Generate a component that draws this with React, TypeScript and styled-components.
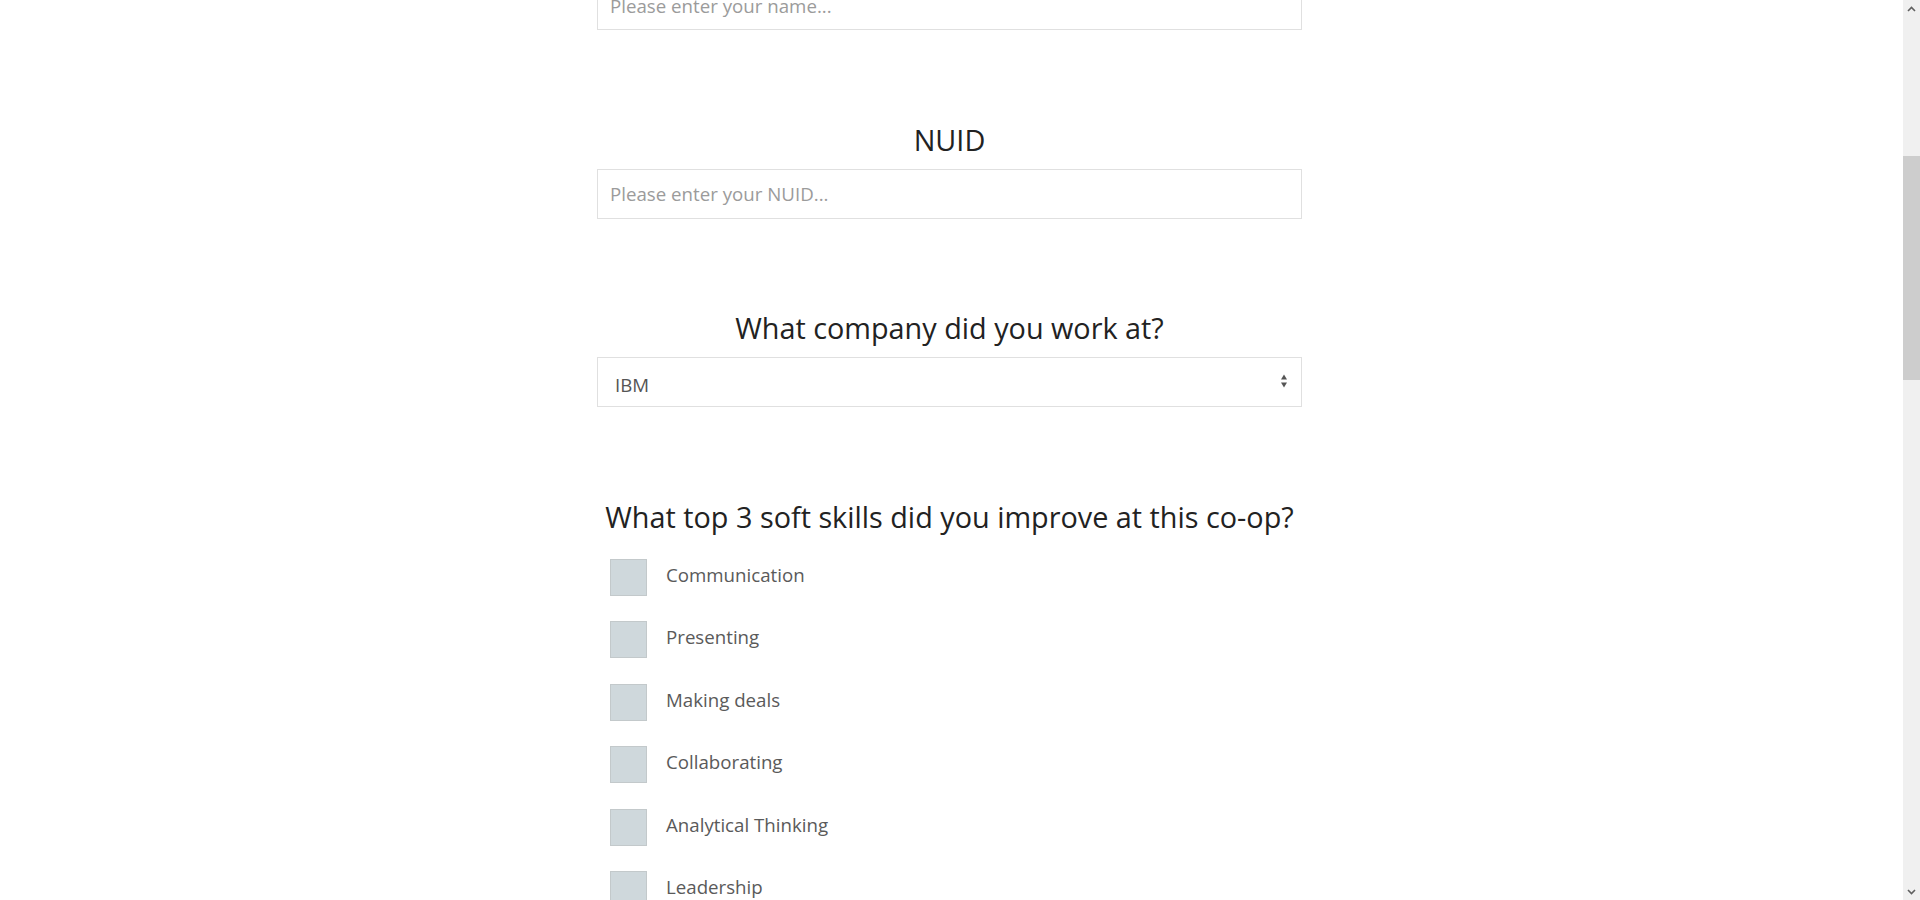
import React, { useLayoutEffect } from "react";
import styled, { createGlobalStyle } from "styled-components";

const GlobalStyle = createGlobalStyle`
  html { scrollbar-width: none; }
  html::-webkit-scrollbar { display: none; }
  body {
    margin: 0;
    background: #ffffff;
    font-family: "Open Sans", "Noto Sans", sans-serif;
  }
  * { box-sizing: border-box; }
`;

const Page = styled.main`
  width: 1903px;
  min-height: 3479px;
  padding: 489px 4px 0 0;
`;

const Form = styled.form`
  width: 705px;
  margin: 0 auto;
  display: flex;
  flex-direction: column;
  gap: 89.5px;
`;

const Section = styled.section`
  display: flex;
  flex-direction: column;
`;

const Question = styled.h2<{ $space?: number }>`
  margin: 0 0 ${(p) => p.$space ?? 9}px;
  font-size: 28.8px;
  line-height: 40px;
  font-weight: 400;
  color: #222222;
  text-align: center;
`;

const TextInput = styled.input`
  width: 100%;
  height: 50px;
  padding: 0 12px;
  border: 1px solid #e0e0e0;
  border-radius: 0;
  outline: none;
  font-family: inherit;
  font-size: 18.7px;
  color: #555555;
  background: #ffffff;
  &::placeholder {
    color: #9b9b9b;
  }
`;

const SelectWrap = styled.div`
  position: relative;
`;

const Select = styled.select`
  width: 100%;
  height: 50px;
  padding: 5px 17px 0;
  border: 1px solid #e0e0e0;
  border-radius: 0;
  outline: none;
  appearance: none;
  background: #ffffff;
  font-family: inherit;
  font-size: 18.7px;
  color: #555555;
`;

const SelectArrows = styled.svg`
  position: absolute;
  right: 14px;
  top: 16px;
  pointer-events: none;
`;

const SkillList = styled.div`
  display: flex;
  flex-direction: column;
  gap: 25.5px;
  padding-left: 13px;
`;

const SkillRow = styled.label`
  display: flex;
  align-items: flex-start;
  gap: 19px;
  cursor: pointer;
`;

const Box = styled.input`
  appearance: none;
  width: 37px;
  height: 37px;
  margin: 0;
  flex: none;
  background: #cfd8dc;
  border: 1px solid #c3c9cb;
  border-radius: 0;
  cursor: pointer;
`;

const SkillName = styled.span`
  margin-top: 3px;
  font-size: 18.7px;
  line-height: 25px;
  color: #5a5a5a;
`;

const Scrollbar = styled.div`
  position: fixed;
  top: 0;
  right: 0;
  width: 17px;
  height: 100vh;
  background: #f0f0f0;
  display: flex;
  flex-direction: column;
`;

const ScrollButton = styled.div`
  height: 17px;
  flex: none;
  display: flex;
  align-items: center;
  justify-content: center;
`;

const ScrollTrack = styled.div`
  flex: 1;
  display: flex;
  flex-direction: column;
`;

const ScrollThumb = styled.div<{ $offset: number; $size: number }>`
  margin-top: ${(p) => p.$offset}px;
  height: ${(p) => p.$size}px;
  width: 17px;
  background: #cdcdcd;
`;

const skills = [
  "Communication",
  "Presenting",
  "Making deals",
  "Collaborating",
  "Analytical Thinking",
  "Leadership",
];

export default function App() {
  useLayoutEffect(() => {
    window.scrollTo(0, 558);
  }, []);

  return (
    <>
      <GlobalStyle />
      <Page>
        <Form onSubmit={(e) => e.preventDefault()}>
          <Section>
            <Question>Name</Question>
            <TextInput type="text" placeholder="Please enter your name..." />
          </Section>
          <Section>
            <Question>NUID</Question>
            <TextInput type="text" placeholder="Please enter your NUID..." />
          </Section>
          <Section>
            <Question>What company did you work at?</Question>
            <SelectWrap>
              <Select defaultValue="IBM">
                <option value="IBM">IBM</option>
                <option value="Google">Google</option>
                <option value="Microsoft">Microsoft</option>
              </Select>
              <SelectArrows width="8" height="16" viewBox="0 0 8 16">
                <path d="M1 6.5 L4 1.5 L7 6.5 Z" fill="#555" />
                <path d="M1 9.5 L4 14.5 L7 9.5 Z" fill="#555" />
              </SelectArrows>
            </SelectWrap>
          </Section>
          <Section>
            <Question $space={22}>What top 3 soft skills did you improve at this co-op?</Question>
            <SkillList>
              {skills.map((s) => (
                <SkillRow key={s}>
                  <Box type="checkbox" />
                  <SkillName>{s}</SkillName>
                </SkillRow>
              ))}
            </SkillList>
          </Section>
        </Form>
      </Page>
      <Scrollbar>
        <ScrollButton>
          <svg width="9" height="6" viewBox="0 0 9 6">
            <path d="M1 5 L4.5 1.5 L8 5" stroke="#606060" strokeWidth="1.6" fill="none" />
          </svg>
        </ScrollButton>
        <ScrollTrack>
          <ScrollThumb $offset={139} $size={224} />
        </ScrollTrack>
        <ScrollButton>
          <svg width="9" height="6" viewBox="0 0 9 6">
            <path d="M1 1 L4.5 4.5 L8 1" stroke="#606060" strokeWidth="1.6" fill="none" />
          </svg>
        </ScrollButton>
      </Scrollbar>
    </>
  );
}
